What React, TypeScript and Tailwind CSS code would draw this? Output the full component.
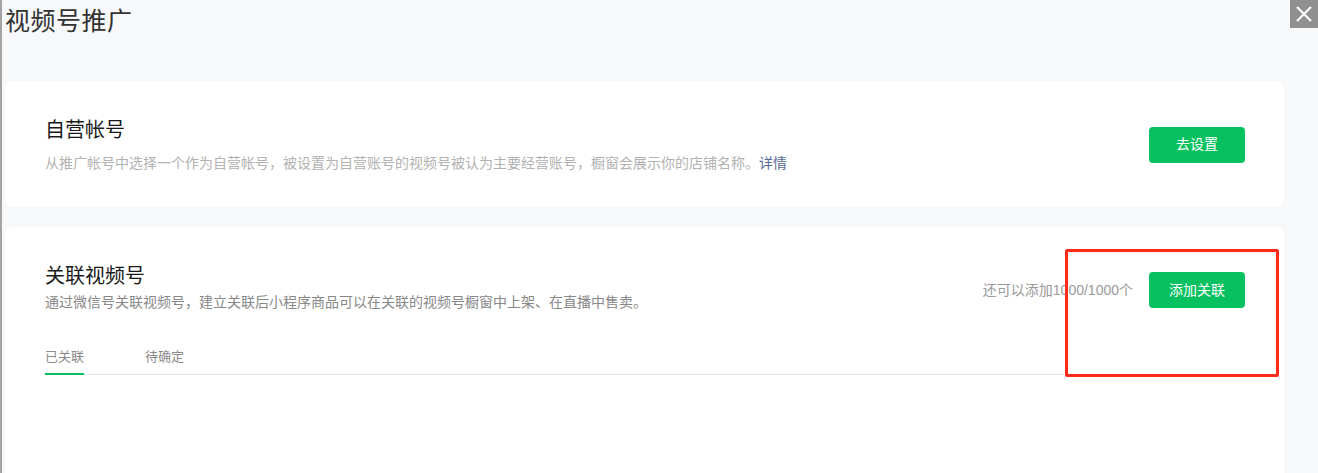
import React, { useState } from 'react';

const font = { fontFamily: '"Liberation Sans", "Noto Sans CJK SC", sans-serif' };

const App = () => {
  const [tab, setTab] = useState(0);
  const tabs = ['已关联', '待确定'];

  return (
    <div className="relative h-[473px] overflow-hidden bg-[#f7f8fa] border-l-2 border-[#a3a3a3] pl-[3px] pr-[34px]" style={font}>
      <button className="absolute top-0 right-0 w-[28px] h-[28px] bg-[#8f8f8f] flex items-center justify-center">
        <svg width="18" height="18" viewBox="0 0 18 18" fill="none" stroke="white" strokeWidth="2.2">
          <path d="M2 2L16 16M16 2L2 16" />
        </svg>
      </button>

      <h1 className="text-[25px] leading-[30px] text-[#333] pt-[6px] tracking-[0.5px]">视频号推广</h1>

      {/* 自营帐号 */}
      <div className="mt-[45px] bg-white rounded-lg pl-[40px] pr-[39px] pt-[35px] pb-[34px] flex items-center justify-between">
        <div>
          <div className="text-[20px] leading-[28px] text-[#1a1a1a]">自营帐号</div>
          <div className="mt-[9px] text-[14px] leading-[20px] text-[#b2b2b2]">
            从推广帐号中选择一个作为自营帐号，被设置为自营账号的视频号被认为主要经营账号，橱窗会展示你的店铺名称。
            <a href="#" className="text-[#576b95]">详情</a>
          </div>
        </div>
        <button className="w-[96px] h-[36px] rounded bg-[#07c160] text-white text-[14px]">去设置</button>
      </div>

      {/* 关联视频号 */}
      <div className="mt-[20px] bg-white rounded-t-lg pl-[40px] pr-[39px] pt-[35px] h-[260px]">
        <div className="flex items-start justify-between">
          <div>
            <div className="text-[20px] leading-[28px] text-[#1a1a1a]">关联视频号</div>
            <div className="mt-[2px] text-[14px] leading-[20px] text-[#888]">
              通过微信号关联视频号，建立关联后小程序商品可以在关联的视频号橱窗中上架、在直播中售卖。
            </div>
          </div>
          <div className="mt-[10px] flex items-center">
            <span className="text-[14px] text-[#9a9a9a] mr-[16px]">还可以添加1000/1000个</span>
            <button className="w-[96px] h-[36px] rounded bg-[#07c160] text-white text-[14px]">添加关联</button>
          </div>
        </div>

        <div className="mt-[35px] flex gap-[61px] border-b border-[#e5e5e5]">
          {tabs.map((t, i) => (
            <button
              key={t}
              onClick={() => setTab(i)}
              className={`-mb-px pb-[6px] text-[13px] leading-[20px] border-b-2 text-[#8a8a8a] ${tab === i ? 'border-[#07c160]' : 'border-transparent'}`}
            >
              {t}
            </button>
          ))}
        </div>
      </div>

      {/* annotation box */}
      <div className="absolute left-[1063px] top-[249px] w-[214px] h-[128px] border-[3px] border-[#ff2a1a] rounded-[2px]" />
    </div>
  );
};

export default App;
